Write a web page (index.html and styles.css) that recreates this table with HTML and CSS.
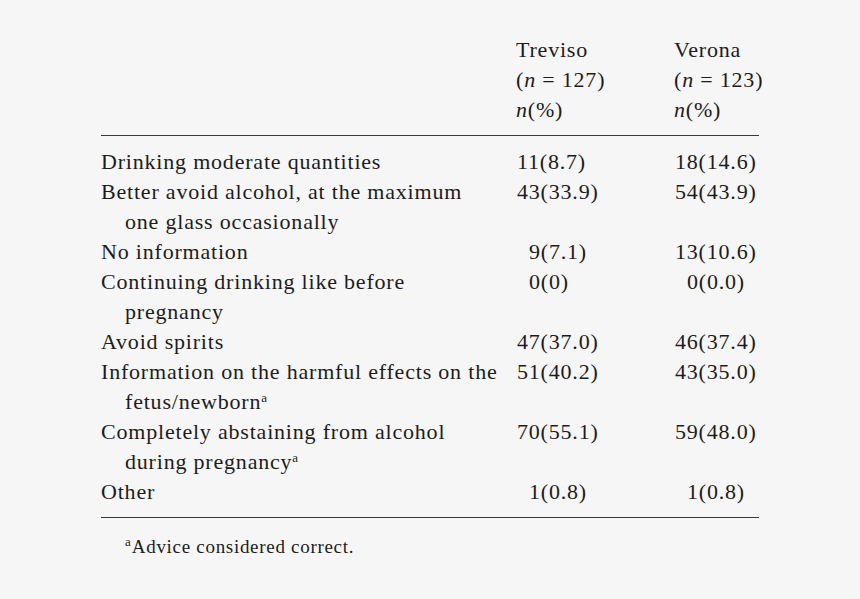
FILE: index.html
```html
<!DOCTYPE html>
<html>
<head>
<meta charset="utf-8">
<link rel="stylesheet" href="styles.css">
</head>
<body>
<div class="page">
  <div class="table">
    <div class="head">
      <div class="lab"></div>
      <div class="hc">Treviso<br>(<i>n</i> = 127)<br><i>n</i>(%)</div>
      <div class="hc">Verona<br>(<i>n</i> = 123)<br><i>n</i>(%)</div>
    </div>
    <div class="body">
      <div class="lab">Drinking moderate quantities</div>
      <div class="num">11(8.7)</div>
      <div class="num">18(14.6)</div>

      <div class="lab">Better avoid alcohol, at the maximum<br>one glass occasionally</div>
      <div class="num">43(33.9)</div>
      <div class="num">54(43.9)</div>

      <div class="lab">No information</div>
      <div class="num ind">9(7.1)</div>
      <div class="num">13(10.6)</div>

      <div class="lab">Continuing drinking like before<br>pregnancy</div>
      <div class="num ind">0(0)</div>
      <div class="num ind">0(0.0)</div>

      <div class="lab">Avoid spirits</div>
      <div class="num">47(37.0)</div>
      <div class="num">46(37.4)</div>

      <div class="lab">Information on the harmful effects on the<br>fetus/newborn<sup>a</sup></div>
      <div class="num">51(40.2)</div>
      <div class="num">43(35.0)</div>

      <div class="lab">Completely abstaining from alcohol<br>during pregnancy<sup>a</sup></div>
      <div class="num">70(55.1)</div>
      <div class="num">59(48.0)</div>

      <div class="lab">Other</div>
      <div class="num ind">1(0.8)</div>
      <div class="num ind">1(0.8)</div>
    </div>
    <div class="foot"><sup>a</sup>Advice considered correct.</div>
  </div>
</div>
</body>
</html>
```

FILE: styles.css
```css
html, body {
  margin: 0;
  padding: 0;
  background: #f6f6f6;
}
.page {
  width: 860px;
  height: 599px;
  padding-top: 35px;
  box-sizing: border-box;
}
.table {
  margin-left: 101px;
  width: 658px;
  font-family: "Liberation Serif", "Times New Roman", serif;
  font-size: 22px;
  letter-spacing: 0.8px;
  line-height: 30px;
  color: #1c1c1c;
}
.head, .body {
  display: grid;
  grid-template-columns: 415px 158px 1fr;
}
.head {
  padding-bottom: 10px;
  border-bottom: 1.5px solid #3a3a3a;
}
.body {
  padding-top: 11px;
  padding-bottom: 10px;
  border-bottom: 1.5px solid #3a3a3a;
}
.hc { white-space: nowrap; }
.lab {
  padding-left: 24px;
  text-indent: -24px;
  white-space: nowrap;
}
.num {
  white-space: nowrap;
  padding-left: 1px;
}
.num.ind { padding-left: 13px; }
sup {
  font-size: 13px;
  letter-spacing: 0;
  line-height: 0;
  vertical-align: 7px;
}
.foot {
  padding-top: 14px;
  padding-left: 24px;
  font-size: 19px;
  letter-spacing: 0.7px;
}
.foot sup { margin-right: 1px; }
```
